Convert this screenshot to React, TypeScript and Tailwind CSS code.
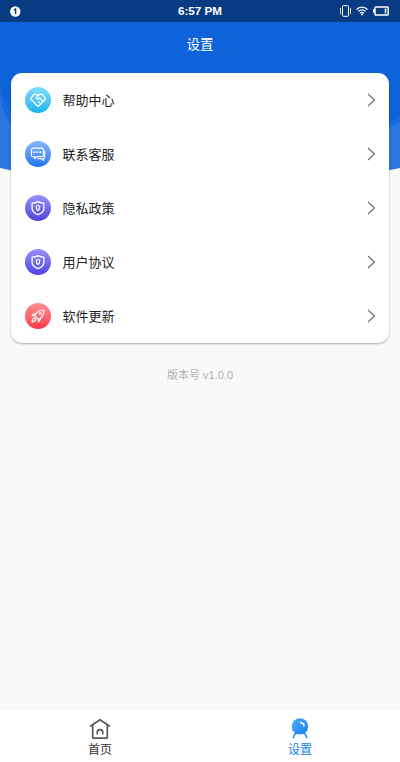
import type { ReactNode } from "react";

type MenuItem = {
  id: string;
  label: string;
  icon: ReactNode;
  tone: string;
};

function HelpIcon() {
  return (
    <svg className="size-[26px]" viewBox="0 0 26 26" fill="none" stroke="#fff" strokeWidth="1.3" strokeLinejoin="round" strokeLinecap="round">
      <path d="M13.2 8.8 11.600 7.300H9.200l-3 3.600c-.4.5-.4.900 0 1.400l6.200 6.600c.5.5 1 .5 1.500 0l6.200-6.600c.4-.5.4-.9 0-1.400l-3-3.600h-2.400l-3.500 3.600 1.200 1.300 2.300-1 3 2.900" />
      <path d="m13.800 14.800 1.700 1.800" />
    </svg>
  );
}

function ServiceIcon() {
  return (
    <svg className="size-[26px]" viewBox="0 0 26 26" fill="none" stroke="#fff" strokeWidth="1.2" strokeLinejoin="round" strokeLinecap="round">
      <path d="M8 7.200h8.800c.9 0 1.500.6 1.500 1.500v5.500c0 .9-.6 1.500-1.500 1.500h-5l-2.200 1.800v-1.800H8c-.9 0-1.500-.6-1.500-1.500V8.700c0-.9.600-1.500 1.500-1.500Z" />
      <path d="M19.700 10v6.300c0 .8-.5 1.300-1.300 1.300v1.700l-2-1.700h-3.400" />
      <path d="M9.200 11.200h.3M12.200 11.200h.3M15.200 11.200h.3" strokeWidth="1.700" />
    </svg>
  );
}

function ShieldIcon() {
  return (
    <svg className="size-[26px]" viewBox="0 0 26 26" fill="none" stroke="#fff" strokeWidth="1.300" strokeLinejoin="round" strokeLinecap="round">
      <path d="M13 6.600c1.700 1.100 3.600 1.600 5.900 1.600v5.200c0 2.800-2.300 4.700-5.900 6.200-3.600-1.500-5.900-3.400-5.900-6.200V8.200c2.300 0 4.200-.5 5.900-1.600Z" />
      <path d="M13 10.500c1.200 0 1.700.7 1.700 1.600 0 1.200-.5 2.900-1.700 3.400-1.200-.5-1.700-2.200-1.700-3.400 0-.9.500-1.600 1.700-1.600Z" strokeWidth="1.200" />
    </svg>
  );
}

function RocketIcon() {
  return (
    <svg className="size-[26px]" viewBox="0 0 26 26" fill="none" stroke="#fff" strokeWidth="1.200" strokeLinejoin="round" strokeLinecap="round">
      <path d="M10 12.500c1.500-3.300 4.500-5.400 9-5.500.1 4.200-1.500 7.400-4.800 9.200" />
      <path d="M11.200 10.400c-1.900-.1-3.300.7-4.200 2.200l3 .2 3.200 3.200.2 3c1.500-1 2.200-2.400 2.100-4.200" />
      <circle cx="15.300" cy="10.700" r="1.200" strokeWidth="1" />
      <path d="M9.400 15c-1.500.2-2.300 1.300-2.300 3.900 2.300-.1 3.500-.9 3.700-2.400Z" />
    </svg>
  );
}

const menuItems: MenuItem[] = [
  { id: "help", label: "帮助中心", icon: <HelpIcon />, tone: "from-[#7edcfc] to-[#05b6ed]" },
  { id: "service", label: "联系客服", icon: <ServiceIcon />, tone: "from-[#88b7ff] to-[#1c73f2]" },
  { id: "privacy", label: "隐私政策", icon: <ShieldIcon />, tone: "from-[#9990ff] to-[#5440dc]" },
  { id: "terms", label: "用户协议", icon: <ShieldIcon />, tone: "from-[#9990ff] to-[#5440dc]" },
  { id: "update", label: "软件更新", icon: <RocketIcon />, tone: "from-[#ff8c94] to-[#ff3447]" }
];

function StatusBar() {
  return (
    <div className="flex h-[22px] items-center justify-between bg-[#093b83] px-[10px] text-white">
      <div className="flex w-[50px] items-center">
        <svg className="size-[11px]" viewBox="0 0 11 11">
          <circle cx="5.300" cy="5.500" r="5.200" fill="#fff" />
          <path d="M4 4.200 5.600 3v5" fill="none" stroke="#093b83" strokeWidth="1.400" />
        </svg>
      </div>
      <span className="font-['Liberation_Sans',sans-serif] text-[11.700px] leading-none font-bold">6:57 PM</span>
      <div className="flex w-[50px] items-center justify-end gap-[5px]">
        <svg className="h-[12px] w-[11px] shrink-0" viewBox="0 0 11 12" fill="none" stroke="#fff">
          <rect x="2.500" y=".7" width="6" height="10.600" rx=".8" strokeWidth="1" />
          <path d="M.5 2.800v6.400M10.500 2.800v6.400" strokeWidth=".8" />
        </svg>
        <svg className="h-[10px] w-[12px] shrink-0" viewBox="0 0 12 10" fill="none" stroke="#fff" strokeWidth="1.300">
          <path d="M.5 3.500c3.100-3.200 7.900-3.200 11 0M2.300 5.400c2.100-2.100 5.300-2.100 7.400 0M4.100 7.200c1.100-1 2.700-1 3.800 0" />
          <path d="m4.800 8.300 1.200 1.500 1.200-1.500c-.7-.6-1.700-.6-2.400 0Z" fill="#fff" stroke="none" />
        </svg>
        <svg className="mr-px h-[10px] w-[16px] shrink-0" viewBox="0 0 16 10" fill="none">
          <path d="M0 3.200h2v3.600H0z" fill="#fff" />
          <rect x="2" y="1" width="13.200" height="8" rx=".8" stroke="#fff" strokeWidth="1.400" />
          <path d="M11.800 2.500h1.500v5h-1.500z" fill="#fff" />
        </svg>
      </div>
    </div>
  );
}

function HeaderBackdrop() {
  return (
    <svg className="absolute top-[22px] left-0 h-[170px] w-[400px]" viewBox="0 22 400 170">
      <path d="M0 22h400v146Q200 212 0 168Z" fill="#2b75de" />
      <path d="M0 22h400v100L380 133 330 150H40Q6 130 0 98Z" fill="#196bdd" />
      <path d="M0 22h400v94L380 127 330 146H45Q6 122 0 85Z" fill="#0f63da" />
    </svg>
  );
}

function HomeIcon() {
  return (
    <svg className="h-[22px] w-[22px]" viewBox="0 0 22 22" fill="none" stroke="#5b5b5b" strokeWidth="1.700" strokeLinejoin="round" strokeLinecap="round">
      <path d="M1.700 9 11 2.700 20.300 9M3.700 8.200v12.200c0 .5.300.8.800.8h13c.5 0 .8-.3.800-.8V8.200" />
      <path d="M8.300 16.700v-1.500c0-3.500 5.400-3.500 5.400 0v1.500" />
    </svg>
  );
}

function SettingsIcon() {
  return (
    <svg className="h-[22px] w-[22px]" viewBox="0 0 22 22" fill="none">
      <defs>
        <linearGradient id="ball" x1="0" y1="0" x2="1" y2="1">
          <stop offset="0" stopColor="#52a9fb" />
          <stop offset="1" stopColor="#1683ed" />
        </linearGradient>
      </defs>
      <circle cx="11" cy="9.400" r="8.200" fill="url(#ball)" />
      <path d="M4.500 20.800c.2-2.300 1.500-4.200 4-5M17.500 20.800c-.2-2.300-1.500-4.200-4-5" stroke="#258deb" strokeWidth="1.600" strokeLinecap="round" />
      <path d="M11.600 5.500c2 .2 3.200 1.400 3.500 3.300" stroke="#fff" strokeWidth="1.600" strokeLinecap="round" />
    </svg>
  );
}

export default function App() {
  return (
    <main className="relative flex h-[762px] w-[400px] flex-col overflow-hidden bg-[#f9f9f9] font-['Liberation_Sans','Noto_Sans_CJK_SC',sans-serif]">
      <HeaderBackdrop />
      <div className="relative flex flex-1 flex-col">
        <StatusBar />
        <header className="flex h-[51px] items-center justify-center pb-[6px]">
          <h1 className="text-[13.500px] leading-5 text-white">设置</h1>
        </header>

        <section className="mx-[11px] h-[270px] rounded-[11px] bg-white shadow-[0_1px_2px_rgba(0,0,0,0.3)]">
          {menuItems.map((item) => (
            <button key={item.id} className="flex h-[54px] w-full items-center pr-[13px] pl-[14px] text-left" type="button">
              <span className={`flex size-[26px] items-center justify-center rounded-full bg-linear-to-b ${item.tone}`}>
                {item.icon}
              </span>
              <span className="flex-1 pt-px pl-[11.5px] text-[13px] leading-5 text-[#222]">{item.label}</span>
              <svg className="h-[14px] w-[9px]" viewBox="0 0 9 14" fill="none" stroke="#6b6b6b" strokeWidth="1.100">
                <path d="m1 1 6.500 6L1 13" />
              </svg>
            </button>
          ))}
        </section>

        <p className="mt-[22px] text-center text-[11px] leading-5 text-[#b0b0b0]">版本号 v1.0.0</p>
      </div>

      <nav className="relative flex h-[52px] bg-white">
        <button className="flex flex-1 flex-col items-center justify-start pt-[7px] text-[#333]" type="button">
          <HomeIcon />
          <span className="mt-px text-[12px] leading-5">首页</span>
        </button>
        <button className="flex flex-1 flex-col items-center justify-start pt-[7px] text-[#1583eb]" type="button">
          <SettingsIcon />
          <span className="mt-px text-[12px] leading-5">设置</span>
        </button>
      </nav>
    </main>
  );
}
